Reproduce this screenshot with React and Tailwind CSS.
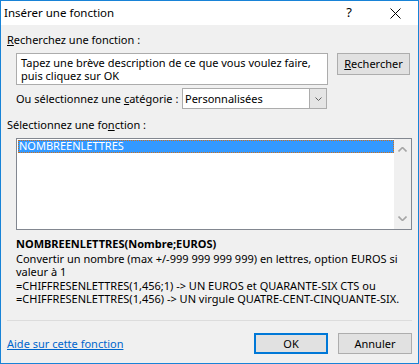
import React from "react";

const FONT = { fontFamily: '"Segoe UI", "Noto Sans", sans-serif' };

function CloseIcon() {
  return (
    <svg width="11" height="11" viewBox="0 0 11 11">
      <path d="M0.5 0.5 L10.5 10.5 M10.5 0.5 L0.5 10.5" stroke="#000" strokeWidth="1" fill="none" />
    </svg>
  );
}

function Chevron({ up, color, w = 8, h = 5, sw = 1 }) {
  const d = up ? `M0.5 ${h - 0.5} L${w / 2} 0.5 L${w - 0.5} ${h - 0.5}` : `M0.5 0.5 L${w / 2} ${h - 0.5} L${w - 0.5} 0.5`;
  return (
    <svg width={w} height={h} viewBox={`0 0 ${w} ${h}`}>
      <path d={d} stroke={color} strokeWidth={sw} fill="none" />
    </svg>
  );
}

export default function App() {
  return (
    <div
      className="w-[419px] h-[364px] bg-[#f0f0f0] border border-[#1883d7] flex flex-col text-[11px] text-black overflow-hidden whitespace-nowrap"
      style={FONT}
    >
      {/* title bar */}
      <div className="h-[24px] bg-white flex items-center shrink-0">
        <span className="pl-[3px] flex-1 leading-[16px] text-[11.5px]">Insérer une fonction</span>
        <div className="w-[46px] h-full flex items-center justify-center text-[13px]">?</div>
        <div className="w-[46px] h-full flex items-center justify-center">
          <CloseIcon />
        </div>
      </div>

      <div className="flex flex-col px-[6px]">
        <div className="mt-[7px] leading-[16px]">
          <span className="underline">R</span>echerchez une fonction :
        </div>

        <div className="mt-[5px] ml-[9px] flex items-start gap-[9px]">
          <div className="w-[312px] h-[32px] bg-white border border-[#acacac] px-[4px] pt-[2px] leading-[13px]">
            Tapez une brève description de ce que vous voulez faire,
            <br />
            puis cliquez sur OK
          </div>
          <button className="w-[73px] h-[22px] bg-[#e1e1e1] border border-[#adadad] leading-[16px]">
            <span className="underline">R</span>echercher
          </button>
        </div>

        <div className="mt-[3px] ml-[9px] flex items-center h-[21px]">
          <span className="w-[166px] leading-[16px]">
            Ou sélectionnez une <span className="underline">c</span>atégorie :
          </span>
          <div className="w-[145px] h-[21px] bg-white border border-[#acacac] flex items-center">
            <span className="flex-1 pl-[2px] leading-[16px]">Personnalisées</span>
            <div className="w-[17px] h-full bg-[#e5e5e5] border-l border-[#acacac] flex items-center justify-center">
              <Chevron color="#606060" w={7} h={4} />
            </div>
          </div>
        </div>

        <div className="mt-[8px] leading-[16px]">
          Sélectionnez une fo<span className="underline">n</span>ction :
        </div>

        <div className="mt-[5px] ml-[9px] w-[396px] h-[92px] bg-white border border-[#828790] flex">
          <div className="flex-1 pt-[1px] pl-[1px]">
            <div className="h-[13px] bg-[#3399ff] text-white leading-[12px] pl-[1px] outline-1 outline-dotted outline-[#d0701a] -outline-offset-1">
              NOMBREENLETTRES
            </div>
          </div>
          <div className="w-[17px] h-full bg-[#f0f0f0] flex flex-col items-center justify-between py-[8px]">
            <Chevron up color="#a6a6a6" w={9} h={5} sw={1.6} />
            <Chevron color="#a6a6a6" w={9} h={5} sw={1.6} />
          </div>
        </div>

        <div className="mt-[6px] ml-[9px] font-bold leading-[16px]">NOMBREENLETTRES(Nombre;EUROS)</div>
        <div className="ml-[9px] leading-[13.4px]">
          Convertir un nombre (max +/-999 999 999 999) en lettres, option EUROS si
          <br />
          valeur à 1
          <br />
          =CHIFFRESENLETTRES(1,456;1) -&gt; UN EUROS et QUARANTE-SIX CTS ou
          <br />
          =CHIFFRESENLETTRES(1,456) -&gt; UN virgule QUATRE-CENT-CINQUANTE-SIX.
        </div>
      </div>

      <div className="mt-auto px-[6px] pb-[9px]">
        <div className="h-px bg-[#dcdcdc] mb-[12px]" />
        <div className="flex items-center">
          <a className="text-[#0066cc] underline leading-[16px] flex-1">Aide sur cette fonction</a>
          <button className="w-[74px] h-[21px] bg-[#e1e1e1] border-2 border-[#0078d7] leading-[16px]">OK</button>
          <button className="ml-[10px] w-[74px] h-[21px] bg-[#e1e1e1] border border-[#adadad] leading-[16px]">
            Annuler
          </button>
        </div>
      </div>
    </div>
  );
}
